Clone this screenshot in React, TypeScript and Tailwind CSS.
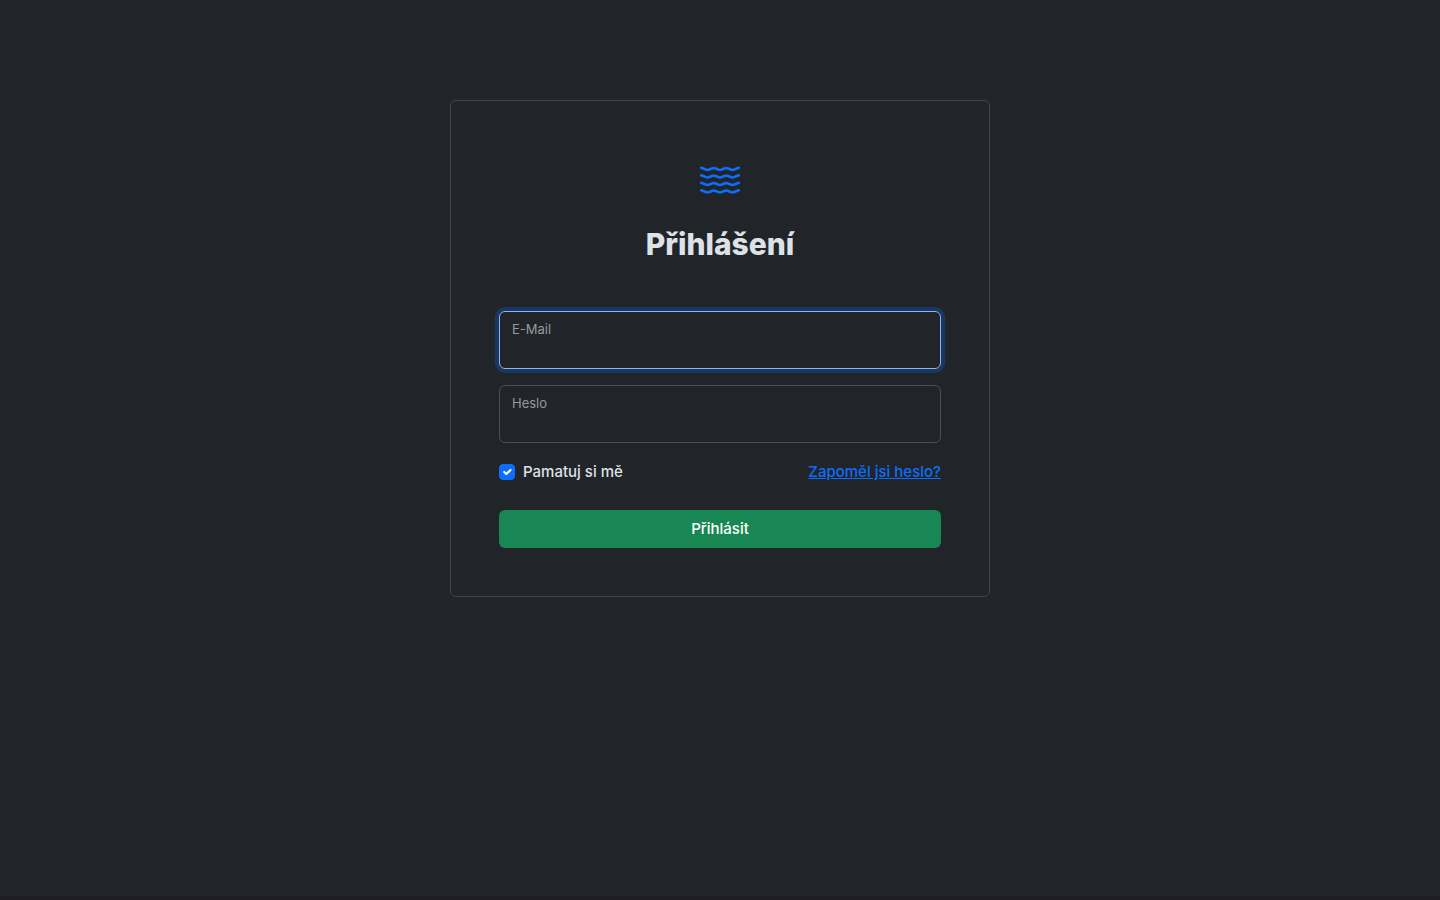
import React, { useState } from "react";

//ICONS
import { BsWater } from "react-icons/bs";

type FloatingInputProps = {
  label: string;
  name: string;
  type: string;
  autoFocus?: boolean;
};

const FloatingInput: React.FC<FloatingInputProps> = ({
  label,
  name,
  type,
  autoFocus,
}) => {
  return (
    <div className="h-[58px] rounded-md border border-[#495057] px-3 pt-[7px] focus-within:border-[#86b7fe] focus-within:ring-4 focus-within:ring-[#0d6efd]/25">
      <label
        htmlFor={name}
        className="block text-[13px] leading-5 text-[#97999c]"
      >
        {label}
      </label>
      <input
        id={name}
        name={name}
        type={type}
        autoFocus={autoFocus}
        className="block h-6 w-full bg-transparent text-base text-[#dee2e6] outline-none"
      />
    </div>
  );
};

const App: React.FC = () => {
  const [remember, setRemember] = useState(true);

  return (
    <div className="min-h-screen border-b-4 border-[#1e1d23] bg-[#212529] px-4 pt-[100px] pb-12 font-['Inter','Liberation_Sans',sans-serif] text-base text-[#dee2e6]">
      <main className="mx-auto w-full max-w-[540px] rounded-md border border-[#43474b] px-12 pt-[58px] pb-12">
        <BsWater className="mx-auto block size-10 text-[#0d6efd]" />
        <h1 className="mt-[26px] mb-12 text-center text-[30px] leading-[38px] font-extrabold">
          Přihlášení
        </h1>
        <form onSubmit={(e) => e.preventDefault()}>
          <div className="flex flex-col gap-4">
            <FloatingInput label="E-Mail" name="email" type="email" autoFocus />
            <FloatingInput label="Heslo" name="password" type="password" />
          </div>
          <div className="mt-[17px] mb-[26px] flex items-center justify-between text-[15px] leading-6 font-medium">
            <div className="flex items-center gap-2">
              <span className="relative block size-4">
                <input
                  id="remember"
                  type="checkbox"
                  checked={remember}
                  onChange={(e) => setRemember(e.target.checked)}
                  className="block size-4 appearance-none rounded border border-[#495057] checked:border-[#0d6efd] checked:bg-[#0d6efd]"
                />
                {remember && (
                  <svg
                    viewBox="0 0 20 20"
                    className="pointer-events-none absolute inset-px size-3.5"
                    fill="none"
                    stroke="#fff"
                    strokeWidth="3"
                    strokeLinecap="round"
                    strokeLinejoin="round"
                  >
                    <path d="m6 10 3 3 6-6" />
                  </svg>
                )}
              </span>
              <label htmlFor="remember">Pamatuj si mě</label>
            </div>
            <a href="#" className="text-[#0d6efd] underline">
              Zapoměl jsi heslo?
            </a>
          </div>
          <button
            type="submit"
            className="h-[38px] w-full rounded-md bg-[#198754] text-[15px] font-medium text-white"
          >
            Přihlásit
          </button>
        </form>
      </main>
    </div>
  );
};

export default App;
